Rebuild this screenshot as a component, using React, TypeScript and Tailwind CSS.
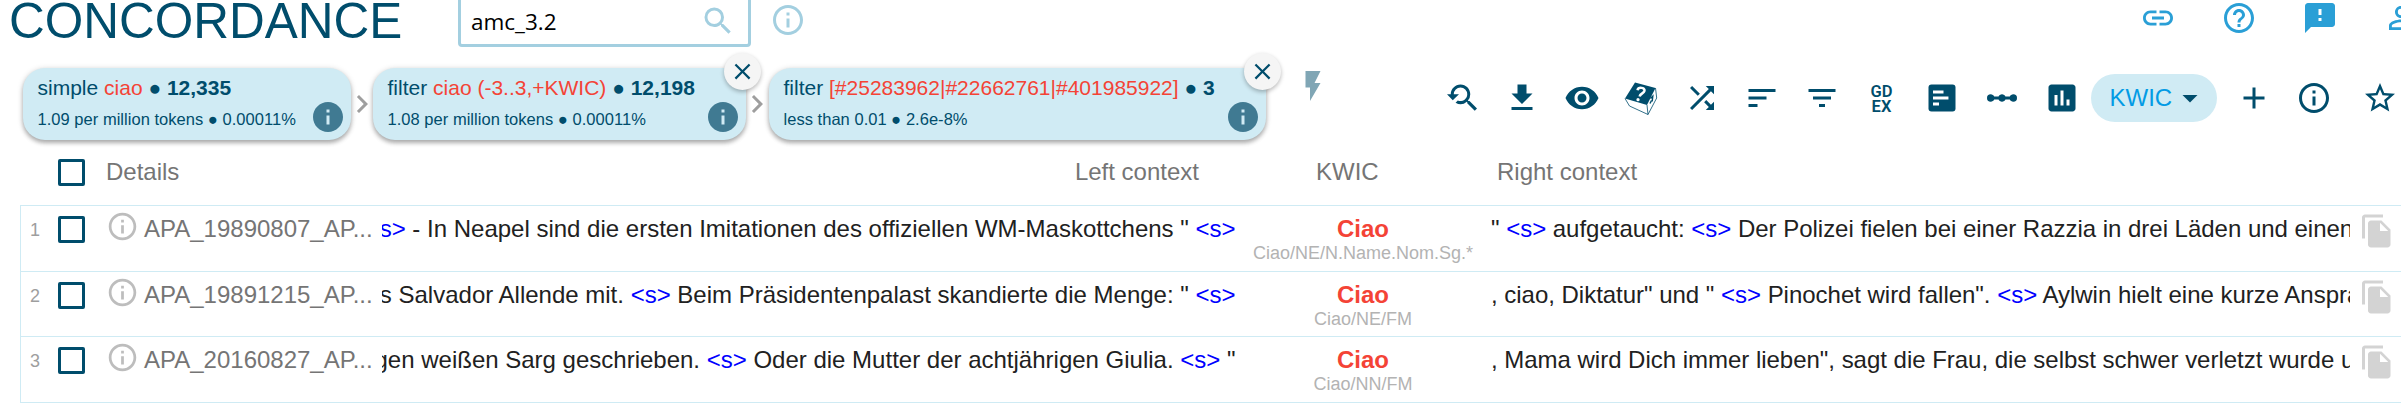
import type { ReactNode } from "react";
import {
  MdAdd,
  MdArrowDropDown,
  MdChevronRight,
  MdClose,
  MdFeedback,
  MdFilterList,
  MdFlashOn,
  MdHelpOutline,
  MdInfo,
  MdInsertChart,
  MdLinearScale,
  MdLink,
  MdPersonOutline,
  MdSearch,
  MdShuffle,
  MdSort,
  MdVisibility,
  MdYoutubeSearchedFor,
} from "react-icons/md";

const S = () => <span className="text-[#0000ff]">&lt;s&gt;</span>;

function PathIcon({ d, className = "size-9" }: { d: string; className?: string }) {
  return (
    <svg viewBox="0 0 24 24" fill="currentColor" className={className}>
      <path d={d} />
    </svg>
  );
}

const INFO =
  "M11 17h2v-6h-2v6zm1-15C6.48 2 2 6.48 2 12s4.48 10 10 10 10-4.48 10-10S17.52 2 12 2zm0 18c-4.41 0-8-3.59-8-8s3.59-8 8-8 8 3.59 8 8-3.59 8-8 8zM11 9h2V7h-2v2z";
const DOWNLOAD = "M19 9h-4V3H9v6H5l7 7 7-7zM5 18v2h14v-2H5z";
const COPY =
  "M16 1H4c-1.1 0-2 .9-2 2v14h2V3h12V1zm-1 4l6 6v10c0 1.1-.9 2-2 2H7.99C6.89 23 6 22.1 6 21l.01-14c0-1.1.89-2 1.99-2h7zm-1 7h5.5L14 6.5V12z";
const STAR =
  "M22 9.24l-7.19-.62L12 2 9.19 8.63 2 9.24l5.46 4.73L5.82 21 12 17.27 18.18 21l-1.63-7.03L22 9.24zM12 15.4l-3.76 2.27 1-4.28-3.32-2.88 4.38-.38L12 6.1l1.71 4.04 4.38.38-3.32 2.88 1 4.28L12 15.4z";

function FrequencyIcon() {
  return (
    <svg viewBox="0 0 24 24" className="size-9">
      <rect x="3" y="3" width="18" height="18" rx="2" fill="currentColor" />
      <path d="M6 7h7v2H6zM6 11h10.300v2H6zM6 15h4v2H6z" fill="#fff" />
    </svg>
  );
}

function Dice() {
  return (
    <svg viewBox="0 0 36 36" className="size-9">
      <path d="M11 2.500 31.500 8 23 25 1 18.500Z" fill="currentColor" />
      <path
        d="M1 18.500 5.500 26 24 34.500 23 25M24 34.500 32.700 18 31.500 8"
        fill="none"
        stroke="currentColor"
        strokeWidth="0.800"
      />
      <path
        d="M13.500 10.200c.8-3.400 7.600-3 7 .6-.5 2.700-4.300 2.400-4.900 5.700"
        fill="none"
        stroke="#fff"
        strokeWidth="2.500"
      />
      <circle cx="14" cy="19.700" r="1.600" fill="#fff" />
      <path d="M26.500 18.500l2.300-2.300-.6 5.300M26 23.500l1.500-3" fill="none" stroke="currentColor" strokeWidth="1.400" />
    </svg>
  );
}

function Chip({
  op,
  query,
  count,
  info,
  width,
  closable,
}: {
  op: string;
  query: string;
  count: string;
  info: string;
  width: string;
  closable?: boolean;
}) {
  return (
    <div
      className={`relative h-[72px] shrink-0 rounded-[22px] bg-[#d0ebf4] pl-[14.500px] text-[#004d6c] shadow-[0_3px_4px_rgba(0,0,0,0.26),0_1px_6px_rgba(0,0,0,0.16)] ${width}`}
    >
      <div className="pt-[8px] text-[21px] leading-6 whitespace-pre">
        {op} <span className="text-[#f44336]">{query}</span> ● <b>{count}</b>
      </div>
      <div className="pt-[9px] text-[16.500px] leading-5 tracking-[0.030px] whitespace-pre">{info}</div>
      <MdInfo className="absolute right-[5px] bottom-[5px] size-9 text-[#407a92]" />
      {closable && (
        <span className="absolute -top-[15px] -right-[15px] flex size-[37px] items-center justify-center rounded-full bg-[#f5f5f5] shadow-[0_2px_4px_rgba(0,0,0,0.28)]">
          <MdClose className="size-[27px]" />
        </span>
      )}
    </div>
  );
}

function Checkbox({ className }: { className: string }) {
  return <span className={`block size-[27px] shrink-0 rounded-[2px] border-3 border-[#004d6c] ${className}`} />;
}

type Row = { n: number; doc: string; left: ReactNode; tag: string; right: ReactNode; height: string };

const rows: Row[] = [
  {
    n: 1,
    doc: "APA_19890807_AP...",
    left: (
      <>
        <S /> - In Neapel sind die ersten Imitationen des offiziellen WM-Maskottchens " <S />
      </>
    ),
    tag: "Ciao/NE/N.Name.Nom.Sg.*",
    right: (
      <>
        " <S /> aufgetaucht: <S /> Der Polizei fielen bei einer Razzia in drei Läden und einen
      </>
    ),
    height: "h-[66px]",
  },
  {
    n: 2,
    doc: "APA_19891215_AP...",
    left: (
      <>
        s Salvador Allende mit. <S /> Beim Präsidentenpalast skandierte die Menge: " <S />
      </>
    ),
    tag: "Ciao/NE/FM",
    right: (
      <>
        , ciao, Diktatur" und " <S /> Pinochet wird fallen". <S /> Aylwin hielt eine kurze Ansprache
      </>
    ),
    height: "h-[65px]",
  },
  {
    n: 3,
    doc: "APA_20160827_AP...",
    left: (
      <>
        gen weißen Sarg geschrieben. <S /> Oder die Mutter der achtjährigen Giulia. <S /> "
      </>
    ),
    tag: "Ciao/NN/FM",
    right: <>, Mama wird Dich immer lieben", sagt die Frau, die selbst schwer verletzt wurde und</>,
    height: "h-[66px]",
  },
];

export default function App() {
  return (
    <div className="h-[417px] w-full overflow-hidden bg-white font-['Liberation_Sans',Arial,sans-serif] text-[#212121]">
      <header className="flex h-[68px] items-start">
        <h1 className="-mt-[8px] ml-[9px] w-[449px] shrink-0 text-[49.500px] leading-[57px] text-[#004d6c]">
          CONCORDANCE
        </h1>
        <div className="-mt-[10px] flex h-[57px] w-[293px] shrink-0 items-start justify-between rounded-[4px] border-3 border-[#a3cfe0] pr-[12.500px] pl-[10px]">
          <span className="pt-[13px] font-['Open_Sans','Noto_Sans',sans-serif] text-[22.500px] leading-8 text-black">
            amc_3.2
          </span>
          <MdSearch className="mt-[9.500px] size-9 text-[#a3cfe0]" />
        </div>
        <PathIcon d={INFO} className="mt-[2px] ml-[18.500px] size-9 shrink-0 text-[#a3cfe0]" />
        <nav className="ml-auto -mr-[17.500px] flex shrink-0 gap-[45px] text-[#2a9fd6]">
          <MdLink className="size-9" />
          <MdHelpOutline className="size-9" />
          <MdFeedback className="size-9" />
          <MdPersonOutline className="size-9" />
        </nav>
      </header>

      <div className="flex h-[84px] items-start pl-[23px]">
        <Chip op="simple" query="ciao" count="12,335" info="1.09 per million tokens ● 0.00011%" width="w-[328px]" />
        <MdChevronRight className="-mx-[7px] mt-[18px] size-9 shrink-0 text-[#9e9e9e]" />
        <Chip
          op="filter"
          query="ciao (-3..3,+KWIC)"
          count="12,198"
          info="1.08 per million tokens ● 0.00011%"
          width="w-[373px]"
          closable
        />
        <MdChevronRight className="-mr-[6px] -ml-[7px] mt-[18px] size-9 shrink-0 text-[#9e9e9e]" />
        <Chip
          op="filter"
          query="[#25283962|#22662761|#401985922]"
          count="3"
          info="less than 0.01 ● 2.6e-8%"
          width="w-[497px]"
          closable
        />
        <MdFlashOn className="ml-[28.500px] size-9 shrink-0 text-[#80a6b5]" />

        <div className="mt-[6px] ml-auto flex h-12 shrink-0 items-center pr-[3.500px] text-[#004d6c]">
          <div className="flex items-center gap-6 pr-[11.500px]">
            <MdYoutubeSearchedFor className="size-9" />
            <PathIcon d={DOWNLOAD} />
            <MdVisibility className="size-9" />
            <Dice />
            <MdShuffle className="size-9" />
            <MdSort className="size-9" />
            <MdFilterList className="size-9" />
            <span className="w-9 pt-px text-center font-['Roboto',sans-serif] text-[16.500px] leading-[15px] font-semibold">
              GD
              <br />
              EX
            </span>
            <FrequencyIcon />
            <MdLinearScale className="size-9" />
            <MdInsertChart className="size-9" />
          </div>
          <button className="flex h-12 w-[126px] items-center rounded-full bg-[#d0ebf4] pl-[18.500px] text-2xl text-[#039be5]">
            KWIC
            <MdArrowDropDown className="size-9 text-[#004d6c]" />
          </button>
          <MdAdd className="ml-[18.500px] size-9" />
          <PathIcon d={INFO} className="ml-6 size-9" />
          <PathIcon d={STAR} className="ml-[30px] size-9" />
        </div>
      </div>

      <div className="flex h-[53px] items-start pt-[6px] text-2xl leading-7 text-[#757575]">
        <Checkbox className="mt-px ml-[58px]" />
        <span className="ml-[21px] w-[399px]">Details</span>
        <span className="w-[694px] text-right">Left context</span>
        <span className="w-[298px] pl-[117px]">KWIC</span>
        <span>Right context</span>
      </div>

      <main className="ml-5 border-t border-l border-[#cfebf4]">
        {rows.map((r) => (
          <div key={r.n} className={`flex items-start border-b border-[#cfebf4] text-2xl leading-7 whitespace-nowrap ${r.height}`}>
            <span className="w-[37px] shrink-0 pt-[10px] pl-[9px] text-[18px] leading-7 text-[#9e9e9e]">{r.n}</span>
            <Checkbox className="mt-[10px]" />
            <PathIcon d={INFO} className="mt-[4px] ml-[20.500px] size-[33px] shrink-0 text-[#bdbdbd]" />
            <span className="w-[243px] shrink-0 pt-[9px] pl-[5.500px] text-[#757575]">{r.doc}</span>
            <div className="flex w-[854px] shrink-0 justify-end overflow-hidden pt-[9px]">
              <span>{r.left}</span>
            </div>
            <div className="flex w-[255px] shrink-0 flex-col items-center pt-[9px]">
              <b className="text-[#f44336]">Ciao</b>
              <span className="-mt-[2px] text-[18px] leading-6 text-[#b3b3b3]">{r.tag}</span>
            </div>
            <div className="w-[859px] shrink-0 overflow-hidden pt-[9px] pl-[0.500px] tracking-[-0.020px]">{r.right}</div>
            <PathIcon d={COPY} className="mt-[7px] ml-[9.500px] size-9 shrink-0 text-[#d3d3d3]" />
          </div>
        ))}
      </main>
    </div>
  );
}
